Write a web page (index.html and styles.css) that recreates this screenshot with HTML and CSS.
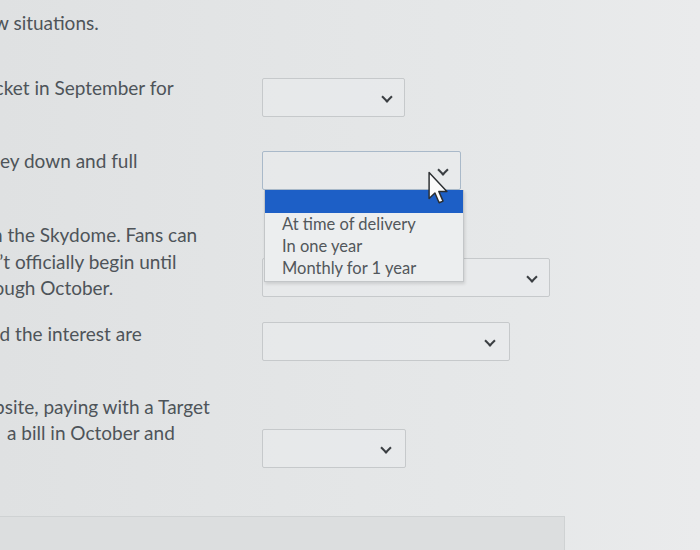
FILE: index.html
```html
<!DOCTYPE html>
<html>
<head>
<meta charset="utf-8">
<link rel="stylesheet" href="styles.css">
</head>
<body>
<main class="page">
  <p class="intro"><span class="ln cut-w">w situations.</span></p>

  <div class="row row-1">
    <p class="q"><span class="ln cut-c">icket in September for</span></p>
    <div class="sel sel-1"><span class="chev"></span></div>
  </div>

  <div class="row row-2">
    <p class="q"><span class="ln">ey down and full</span></p>
    <div class="sel sel-2 is-open">
      <span class="chev"></span>
      <ul class="menu">
        <li class="opt opt-active"></li>
        <li class="opt">At time of delivery</li>
        <li class="opt">In one year</li>
        <li class="opt">Monthly for 1 year</li>
      </ul>
    </div>
  </div>

  <div class="row row-3">
    <p class="q">
      <span class="ln cut-n">n the Skydome. Fans can</span>
      <span class="ln cut-nt">n’t officially begin until</span>
      <span class="ln cut-ro">rough October.</span>
    </p>
    <div class="sel sel-3"><span class="chev"></span></div>
  </div>

  <div class="row row-4">
    <p class="q"><span class="ln cut-nd">nd the interest are</span></p>
    <div class="sel sel-4"><span class="chev"></span></div>
  </div>

  <div class="row row-5">
    <p class="q">
      <span class="ln cut-eb">ebsite, paying with a Target</span>
      <span class="ln pad-a">a bill in October and</span>
    </p>
    <div class="sel sel-5"><span class="chev"></span></div>
  </div>

  <div class="footer-box"></div>

  <svg class="cursor" width="22" height="34" viewBox="0 0 13 21">
    <path d="M1 1 L1 17 L4.6 13.6 L7.2 19.6 L9.6 18.6 L7 12.6 L12 12.6 Z" fill="#fbfbfb" stroke="#2a2d30" stroke-width="0.9" stroke-linejoin="round"/>
  </svg>
</main>
</body>
</html>
```
FILE: styles.css
```css
html, body {
  margin: 0;
  padding: 0;
  height: 100%;
  overflow: hidden;
}
body {
  background: linear-gradient(90deg, #dfe1e2 0%, #e3e5e6 40%, #e6e8e9 75%, #eaebec 100%);
  font-family: Lato, "Open Sans", sans-serif;
  font-size: 19px;
  color: #4e5459;
}
.page {
  position: relative;
  display: flex;
  flex-direction: column;
  padding-top: 10px;
  overflow: hidden;
  height: 540px;
}
p { margin: 0; }
.ln {
  display: block;
  line-height: 26.5px;
  white-space: nowrap;
}
.intro { height: 26px; }
.cut-w { margin-left: -6px; }
.cut-c { margin-left: -10px; }
.cut-n { margin-left: -8px; }
.cut-nt { margin-left: -11px; }
.cut-ro { margin-left: -13px; }
.cut-nd { margin-left: -11px; }
.cut-eb { margin-left: -16px; }
.pad-a { padding-left: 7px; }

.row {
  display: flex;
  align-items: flex-start;
}
.q {
  width: 262px;
  flex: none;
  overflow: hidden;
}
.row-1 { margin-top: 39px; }
.row-2 { margin-top: 31px; }
.row-3 { margin-top: 32px; }
.row-4 { margin-top: 19px; }
.row-5 { margin-top: 33px; }

.sel {
  position: relative;
  box-sizing: border-box;
  height: 39px;
  border: 1px solid #c6c9cb;
  border-radius: 2px;
  background: rgba(236, 238, 239, 0.45);
  flex: none;
}
.row-1 .sel { margin-top: 3px; }
.row-2 .sel { margin-top: 3px; }
.row-3 .sel { margin-top: 36px; }
.row-4 .sel { margin-top: 1px; }
.row-5 .sel { margin-top: 35px; }
.sel-1 { width: 143px; }
.sel-2 { width: 199px; border-color: #a9b9c9; }
.sel-3 { width: 288px; }
.sel-4 { width: 248px; }
.sel-5 { width: 144px; }

.chev {
  position: absolute;
  right: 13px;
  top: 14px;
  width: 6px;
  height: 6px;
  border-right: 2px solid #3a3e42;
  border-bottom: 2px solid #3a3e42;
  transform: rotate(45deg);
}
.sel-4 .chev, .sel-5 .chev { right: 15px; }

.menu {
  position: absolute;
  z-index: 2;
  left: 1px;
  top: 38px;
  width: 198px;
  margin: 0;
  padding: 0 0 2px;
  list-style: none;
  background: #eceeef;
  border: 1px solid #c3c6c8;
  border-top: none;
  box-shadow: 1px 2px 3px rgba(0, 0, 0, 0.12);
}
.opt {
  font-size: 16.5px;
  line-height: 22px;
  padding-left: 17px;
  color: #52575b;
  white-space: nowrap;
}
.opt-active {
  height: 23px;
  background: #1d5fc6;
}

.footer-box {
  margin-top: 48px;
  width: 565px;
  height: 40px;
  flex: none;
  box-sizing: border-box;
  background: #dcdedf;
  border: 1px solid #cfd2d3;
  border-left: none;
}

.cursor {
  position: absolute;
  left: 427px;
  top: 171px;
  z-index: 3;
}
```
